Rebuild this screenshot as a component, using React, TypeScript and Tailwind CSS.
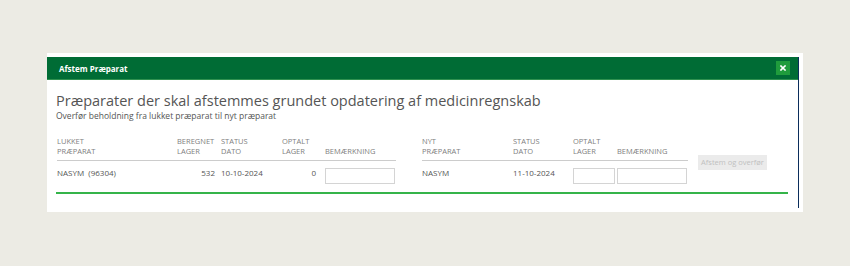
import React from "react";

const font = { fontFamily: '"Open Sans", "Noto Sans", sans-serif' };

function Input({ w }: { w: string }) {
  return <div className={`${w} h-[16px] border border-[#d4d4d4] bg-white`} />;
}

export default function App() {
  return (
    <div
      className="w-[850px] h-[266px] bg-[#ecebe4] pt-[53px] pl-[47px] font-['Open_Sans',sans-serif]"
      style={font}
    >
      <div className="w-[756px] h-[159px] bg-white pt-[2px]">
        <div className="w-[752px] h-[151px] border-r border-[#0b2d5b]">
          <div className="mt-[2px] h-[23px] bg-[#006c35] border-b border-[#2f9150] flex items-center justify-between pl-[12px] pr-[8px]">
            <span className="text-white text-[8px] font-bold leading-[10px] pt-[1px]">
              Afstem Præparat
            </span>
            <div className="w-[14px] h-[14px] bg-[#1f9c3c] flex items-center justify-center">
              <svg width="6" height="6" viewBox="0 0 6 6">
                <path d="M1 1L5 5M5 1L1 5" stroke="white" strokeWidth="1.6" strokeLinecap="square" />
              </svg>
            </div>
          </div>
          <div className="pl-[9px]">
            <div className="mt-[11px] text-[14.5px] leading-[20px] text-[#555555]">
              Præparater der skal afstemmes grundet opdatering af medicinregnskab
            </div>
            <div className="text-[8.5px] leading-[11px] text-[#555555] -mt-[1px]">
              Overfør beholdning fra lukket præparat til nyt præparat
            </div>
            <div className="mt-[15px] ml-[1px] flex items-start">
              {/* left table */}
              <div className="w-[339px]">
                <div className="flex text-[7.5px] leading-[10px] text-[#808080] pb-[4px] border-b border-[#cccccc]">
                  <div className="w-[120px]">LUKKET<br />PRÆPARAT</div>
                  <div className="w-[44px]">BEREGNET<br />LAGER</div>
                  <div className="w-[61px]">STATUS<br />DATO</div>
                  <div className="w-[43px]">OPTALT<br />LAGER</div>
                  <div className="w-[71px] pt-[10px]">BEMÆRKNING</div>
                </div>
                <div className="flex h-[24px] text-[8px] leading-[10px] text-[#555555]">
                  <div className="w-[120px] pt-[7px] whitespace-pre">NASYM  (96304)</div>
                  <div className="w-[38px] pt-[7px] text-right">532</div>
                  <div className="w-[6px]" />
                  <div className="w-[61px] pt-[7px]">10-10-2024</div>
                  <div className="w-[34px] pt-[7px] text-right">0</div>
                  <div className="w-[9px]" />
                  <div className="pt-[7px]">
                    <Input w="w-[70px]" />
                  </div>
                </div>
              </div>
              {/* right table */}
              <div className="ml-[26px] w-[266px]">
                <div className="flex text-[7.5px] leading-[10px] text-[#808080] pb-[4px] border-b border-[#cccccc]">
                  <div className="w-[91px]">NYT<br />PRÆPARAT</div>
                  <div className="w-[60px]">STATUS<br />DATO</div>
                  <div className="w-[44px]">OPTALT<br />LAGER</div>
                  <div className="w-[71px] pt-[10px]">BEMÆRKNING</div>
                </div>
                <div className="flex h-[24px] text-[8px] leading-[10px] text-[#555555]">
                  <div className="w-[91px] pt-[7px]">NASYM</div>
                  <div className="w-[60px] pt-[7px]">11-10-2024</div>
                  <div className="w-[44px] pt-[7px]">
                    <Input w="w-[42px]" />
                  </div>
                  <div className="pt-[7px]">
                    <Input w="w-[70px]" />
                  </div>
                </div>
              </div>
              <div className="ml-[10px] mt-[19px] w-[69px] h-[15px] bg-[#ebebeb] text-[#c0c0c0] text-[7.5px] flex items-center justify-center">
                Afstem og overfør
              </div>
            </div>
            <div className="mt-[7px] w-[732px] h-[2px] bg-[#35b44a]" />
          </div>
        </div>
      </div>
    </div>
  );
}
